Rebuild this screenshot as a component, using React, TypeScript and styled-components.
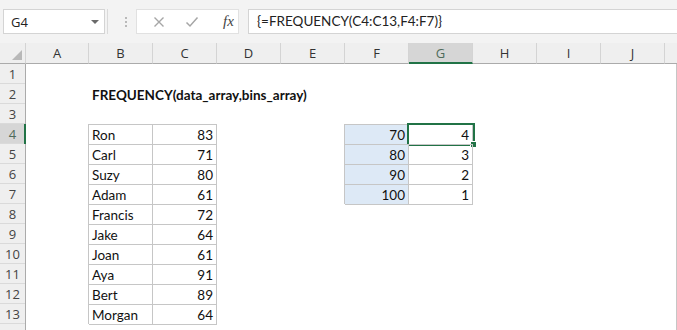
import styled, { createGlobalStyle } from "styled-components";

const GlobalStyle = createGlobalStyle`
  html, body {
    margin: 0;
    padding: 0;
    background: #ffffff;
    overflow: hidden;
  }
`;

const COLS = ["A", "B", "C", "D", "E", "F", "G", "H", "I", "J"];
const SELECTED_COL = "G";
const SELECTED_ROW = 4;
const GREEN = "#217346";
const LINE = "#c6c6c6";

type CellValue = { text: string; align?: "left" | "right"; bold?: boolean; table?: boolean; fill?: boolean; selected?: boolean };

const names = ["Ron", "Carl", "Suzy", "Adam", "Francis", "Jake", "Joan", "Aya", "Bert", "Morgan"];
const scores = [83, 71, 80, 61, 72, 64, 61, 91, 89, 64];
const bins = [70, 80, 90, 100];
const freq = [4, 3, 2, 1];

const cells: Record<string, CellValue> = {
  B2: { text: "FREQUENCY(data_array,bins_array)", bold: true },
};
names.forEach((n, i) => {
  cells[`B${i + 4}`] = { text: n, table: true };
  cells[`C${i + 4}`] = { text: String(scores[i]), align: "right", table: true };
});
bins.forEach((b, i) => {
  cells[`F${i + 4}`] = { text: String(b), align: "right", table: true, fill: true };
  cells[`G${i + 4}`] = { text: String(freq[i]), align: "right", table: true, selected: i === 0 };
});

const Window = styled.div`
  width: 677px;
  height: 330px;
  overflow: hidden;
  font-family: Lato, "Open Sans", sans-serif;
  background: #fff;
`;

const FormulaBar = styled.div`
  display: flex;
  align-items: flex-start;
  height: 43px;
  box-sizing: border-box;
  padding: 9px 0 0 3px;
  background: #f3f3f3;
`;

const NameBox = styled.div`
  width: 102px;
  height: 25px;
  box-sizing: border-box;
  border: 1px solid #d4d4d4;
  background: #fff;
  display: flex;
  align-items: center;
  justify-content: space-between;
  padding: 0 5px 0 7px;
  font-family: "Open Sans", sans-serif;
  font-size: 13px;
  color: #222;
`;

const Caret = styled.span`
  width: 0;
  height: 0;
  border-left: 4px solid transparent;
  border-right: 4px solid transparent;
  border-top: 4px solid #6a6a6a;
`;

const Grip = styled.div`
  width: 31px;
  height: 25px;
  display: flex;
  align-items: center;
  justify-content: space-between;
  padding: 0 9px 0 2px;
  box-sizing: border-box;
`;

const GripLine = styled.span`
  width: 1px;
  height: 25px;
  background: #dadada;
`;

const Dots = styled.span`
  display: flex;
  flex-direction: column;
  gap: 2px;
  & > i {
    width: 2px;
    height: 2px;
    background: #b9b9b9;
  }
`;

const FnBox = styled.div`
  width: 103px;
  height: 25px;
  box-sizing: border-box;
  border: 1px solid #e1e1e1;
  background: #fff;
  display: flex;
  align-items: center;
  padding-left: 16px;
  gap: 20px;
`;

const Fx = styled.span`
  font-family: "Liberation Serif", serif;
  font-style: italic;
  font-size: 15px;
  color: #444;
  margin-left: 4px;
`;

const FormulaInput = styled.div`
  flex: 1;
  height: 25px;
  margin-left: 9px;
  box-sizing: border-box;
  border: 1px solid #d4d4d4;
  border-right: none;
  background: #fff;
  padding-left: 8px;
  font-size: 13.5px;
  line-height: 23px;
  color: #222;
  white-space: nowrap;
`;

const Sheet = styled.div`
  display: grid;
  grid-template-columns: 26px 63px repeat(9, 64px) 12px;
  grid-template-rows: 21px;
  grid-auto-rows: 20px;
`;

const Corner = styled.div`
  background: #efefef;
  border-right: 1px solid #d4d4d4;
  border-bottom: 1px solid #ababab;
  box-sizing: border-box;
  position: relative;
  &::after {
    content: "";
    position: absolute;
    right: 3px;
    bottom: 3px;
    border-left: 10px solid transparent;
    border-bottom: 10px solid #b8b8b8;
  }
`;

const ColHead = styled.div<{ $sel?: boolean }>`
  background: ${(p) => (p.$sel ? "#d6d6d6" : "#efefef")};
  border-right: 1px solid #d4d4d4;
  border-bottom: ${(p) => (p.$sel ? `2px solid ${GREEN}` : "1px solid #ababab")};
  box-sizing: border-box;
  display: flex;
  align-items: center;
  justify-content: center;
  font-family: "Open Sans", sans-serif;
  font-size: 13px;
  color: ${(p) => (p.$sel ? "#4f6b5a" : "#333")};
  padding-top: ${(p) => (p.$sel ? "1px" : "0")};
`;

const RowHead = styled.div<{ $sel?: boolean }>`
  background: ${(p) => (p.$sel ? "#d6d6d6" : "#efefef")};
  border-right: ${(p) => (p.$sel ? `2px solid ${GREEN}` : "1px solid #ababab")};
  box-shadow: inset 0 -1px 0 #dadada;
  box-sizing: border-box;
  display: flex;
  align-items: center;
  justify-content: center;
  font-family: "Open Sans", sans-serif;
  font-size: 13px;
  color: ${(p) => (p.$sel ? "#4f6b5a" : "#444")};
  padding-left: ${(p) => (p.$sel ? "1px" : "0")};
`;

const Cell = styled.div<{
  $align?: string;
  $bold?: boolean;
  $table?: boolean;
  $fill?: boolean;
  $last?: boolean;
  $leftEdge?: boolean;
}>`
  position: relative;
  box-sizing: border-box;
  background: ${(p) => (p.$fill ? "#dde9f6" : "transparent")};
  font-size: 13.5px;
  font-weight: ${(p) => (p.$bold ? 700 : 400)};
  color: #111;
  line-height: 20px;
  padding: 1px 4px 0 3px;
  text-align: ${(p) => p.$align || "left"};
  white-space: nowrap;
  box-shadow: ${(p) =>
    p.$table
      ? [
          `inset 0 1px 0 ${LINE}`,
          `inset -1px 0 0 ${LINE}`,
          p.$leftEdge ? `-1px 0 0 ${LINE}` : null,
          p.$last ? `0 1px 0 ${LINE}` : null,
        ]
          .filter(Boolean)
          .join(", ")
      : "none"};
`;

const Selection = styled.div`
  position: absolute;
  left: -2px;
  top: -1px;
  right: -2px;
  bottom: -2px;
  border: 2px solid ${GREEN};
  pointer-events: none;
  &::after {
    content: "";
    position: absolute;
    right: -4px;
    bottom: -4px;
    width: 5px;
    height: 5px;
    background: ${GREEN};
    border: 1px solid #fff;
  }
`;

const RightPad = styled.div<{ $head?: boolean }>`
  background: ${(p) => (p.$head ? "#efefef" : "transparent")};
  border-bottom: ${(p) => (p.$head ? "1px solid #ababab" : "none")};
  border-right: ${(p) => (p.$head ? "none" : "1px solid #c6c6c6")};
  box-sizing: border-box;
`;

const lastRow: Record<string, number> = { B: 13, C: 13, F: 7, G: 7 };

function XIcon() {
  return (
    <svg width="12" height="12" viewBox="0 0 12 12">
      <path d="M1.5 1.5 L10.5 10.5 M10.5 1.5 L1.5 10.5" stroke="#a6a6a6" strokeWidth="1.4" fill="none" />
    </svg>
  );
}

function CheckIcon() {
  return (
    <svg width="14" height="12" viewBox="0 0 14 12">
      <path d="M1.5 6.5 L5 10 L12.5 1.5" stroke="#a6a6a6" strokeWidth="1.5" fill="none" />
    </svg>
  );
}

export default function App() {
  const rows = Array.from({ length: 14 }, (_, i) => i + 1);
  return (
    <>
      <GlobalStyle />
      <Window>
        <FormulaBar>
          <NameBox>
            G4
            <Caret />
          </NameBox>
          <Grip>
            <GripLine />
            <Dots>
              <i />
              <i />
              <i />
            </Dots>
          </Grip>
          <FnBox>
            <XIcon />
            <CheckIcon />
            <Fx>fx</Fx>
          </FnBox>
          <FormulaInput>{"{=FREQUENCY(C4:C13,F4:F7)}"}</FormulaInput>
        </FormulaBar>
        <Sheet>
          <Corner />
          {COLS.map((c) => (
            <ColHead key={c} $sel={c === SELECTED_COL}>
              {c}
            </ColHead>
          ))}
          <RightPad $head />
          {rows.map((r) => (
            <Row key={r} r={r} />
          ))}
        </Sheet>
      </Window>
    </>
  );
}

function Row({ r }: { r: number }) {
  return (
    <>
      {/* row 14 is cut by the window edge, so its label is not shown */}
      <RowHead $sel={r === SELECTED_ROW}>{r < 14 ? r : ""}</RowHead>
      {COLS.map((c) => {
        const v = cells[`${c}${r}`];
        const inTable = !!v?.table;
        return (
          <Cell
            key={c}
            $align={v?.align}
            $bold={v?.bold}
            $table={inTable}
            $fill={v?.fill}
            $leftEdge={inTable && (c === "B" || c === "F")}
            $last={inTable && r === lastRow[c]}
          >
            {v?.text}
            {v?.selected && <Selection />}
          </Cell>
        );
      })}
      <RightPad />
    </>
  );
}
